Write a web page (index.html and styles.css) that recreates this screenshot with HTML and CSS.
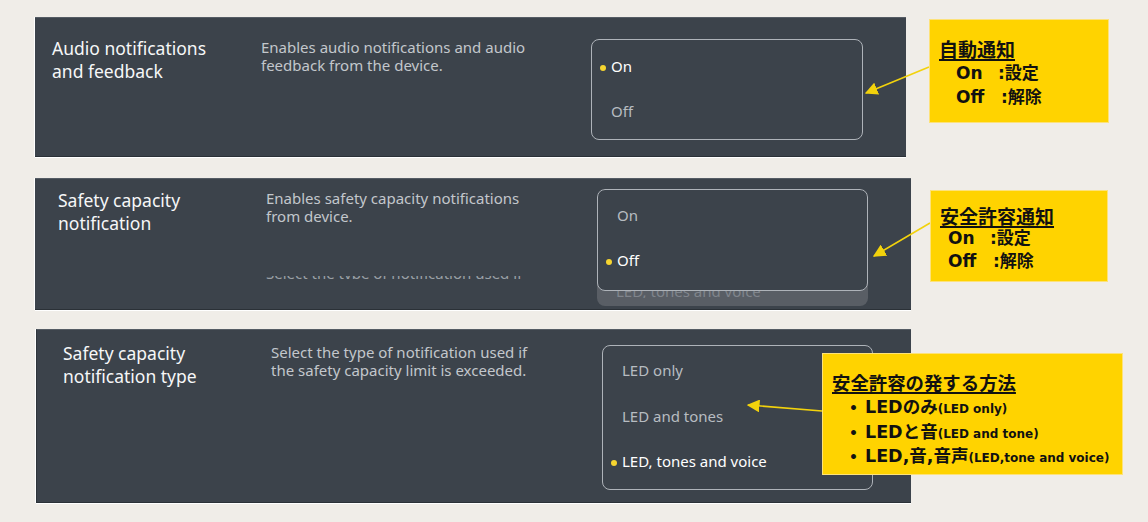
FILE: index.html
```html
<!DOCTYPE html>
<html lang="ja">
<head>
    <meta charset="UTF-8">
    <meta name="viewport" content="width=device-width, initial-scale=1.0">
    <title>Notification settings</title>
    <link rel="stylesheet" href="styles.css">
</head>
<body>
    <div class="page">

        <!-- Audio notifications -->
        <div class="row row-audio">
            <section class="panel panel-audio">
                <h3 class="setting-title">Audio notifications<br>and feedback</h3>
                <p class="setting-desc">Enables audio notifications and audio<br>feedback from the device.</p>
                <div class="dropdown">
                    <div class="option selected">On</div>
                    <div class="option">Off</div>
                </div>
            </section>
            <aside class="callout callout-audio">
                <div class="callout-head">自動通知</div>
                <div class="callout-line"><span class="key key-on">On</span>:設定</div>
                <div class="callout-line"><span class="key key-off">Off</span>:解除</div>
            </aside>
        </div>

        <!-- Safety capacity notification -->
        <div class="row row-safety">
            <section class="panel panel-safety">
                <h3 class="setting-title">Safety capacity<br>notification</h3>
                <div class="desc-col">
                    <p class="setting-desc">Enables safety capacity notifications<br>from device.</p>
                    <div class="ghost"><span>Select the type of notification used if</span></div>
                </div>
                <div class="dropdown-wrap">
                    <div class="dropdown">
                        <div class="option">On</div>
                        <div class="option selected">Off</div>
                    </div>
                    <div class="dropdown-tail"><span>LED, tones and voice</span></div>
                </div>
            </section>
            <aside class="callout callout-safety">
                <div class="callout-head">安全許容通知</div>
                <div class="callout-line"><span class="key key-on">On</span>:設定</div>
                <div class="callout-line"><span class="key key-off">Off</span>:解除</div>
            </aside>
        </div>

        <!-- Safety capacity notification type -->
        <div class="row row-type">
            <section class="panel panel-type">
                <h3 class="setting-title">Safety capacity<br>notification type</h3>
                <p class="setting-desc">Select the type of notification used if<br>the safety capacity limit is exceeded.</p>
                <div class="dropdown">
                    <div class="option">LED only</div>
                    <div class="option">LED and tones</div>
                    <div class="option selected">LED, tones and voice</div>
                </div>
            </section>
            <aside class="callout callout-type">
                <div class="callout-head">安全許容の発する方法</div>
                <ul class="callout-list">
                    <li>LEDのみ<small>(LED only)</small></li>
                    <li>LEDと音<small>(LED and tone)</small></li>
                    <li>LED,音,音声<small>(LED,tone and voice)</small></li>
                </ul>
            </aside>
        </div>

        <!-- annotation arrows -->
        <svg class="arrows" width="1148" height="522" viewBox="0 0 1148 522">
            <defs>
                <marker id="head" viewBox="0 0 10 10" refX="9" refY="5" markerWidth="8" markerHeight="8" orient="auto">
                    <path d="M0 0 L10 5 L0 10 Z" fill="#f2d20c"/>
                </marker>
            </defs>
            <line x1="929" y1="67" x2="866" y2="93" stroke="#f2d20c" stroke-width="1.6" marker-end="url(#head)"/>
            <line x1="930" y1="223" x2="874" y2="256" stroke="#f2d20c" stroke-width="1.6" marker-end="url(#head)"/>
            <line x1="822" y1="411" x2="748" y2="405" stroke="#f2d20c" stroke-width="1.6" marker-end="url(#head)"/>
        </svg>
    </div>
</body>
</html>
```

FILE: styles.css
```css
body {
    margin: 0;
    background-color: #f0ede8;
    font-family: "Noto Sans", "Open Sans", sans-serif;
    color: #f4f5f6;
}

.page {
    position: relative;
    width: 1148px;
    height: 522px;
    padding: 17px 0 0 35px;
    box-sizing: border-box;
    overflow: hidden;
}

.row {
    display: flex;
    align-items: flex-start;
}

.row-safety {
    margin-top: 21px;
}

.row-type {
    margin-top: 19px;
    margin-left: 1px;
}

/* dark settings panels */
.panel {
    display: flex;
    align-items: flex-start;
    box-sizing: border-box;
    background-color: #3c434b;
    border-top: 1px solid #555c64;
    border-bottom: 1px solid #2b3137;
    box-shadow: -1px 0 0 #ffffff, 0 1px 0 #ffffff;
}

.panel-audio {
    width: 871px;
    height: 140px;
    padding: 19px 0 0 17px;
}

.panel-safety {
    width: 876px;
    height: 132px;
    padding: 10px 0 0 23px;
}

.panel-type {
    width: 875px;
    height: 174px;
    padding: 12px 0 0 26px;
    border-left: 1px solid #2f353b;
}

.setting-title {
    width: 209px;
    flex-shrink: 0;
    margin: 0;
    font-size: 17.5px;
    font-weight: normal;
    line-height: 23px;
    color: #f6f7f8;
}

.panel-safety .setting-title,
.panel-type .setting-title {
    width: 208px;
}

.setting-desc {
    margin: 0;
    font-size: 15px;
    line-height: 18px;
    color: #c3c7cc;
}

.panel-audio .setting-desc {
    width: 330px;
    margin-top: 1px;
}

.panel-type .setting-desc {
    width: 331px;
    margin-top: 1px;
}

.desc-col {
    width: 331px;
}

/* the next row's text peeking through the screenshot */
.ghost {
    height: 3px;
    margin-top: 51px;
    overflow: hidden;
    font-size: 15px;
    line-height: 18px;
    color: #9aa0a6;
}

.ghost span {
    display: block;
    margin-top: -12px;
}

/* dropdown list */
.dropdown {
    box-sizing: border-box;
    width: 272px;
    height: 101px;
    margin-top: 2px;
    padding-top: 4px;
    border: 1px solid #aeb3b9;
    border-radius: 8px;
    background-color: #3c434b;
}

.option {
    height: 45px;
    line-height: 45px;
    padding-left: 19px;
    font-size: 15px;
    color: #b7bcc1;
}

.option.selected {
    color: #ffffff;
}

.option.selected::before {
    content: "";
    display: inline-block;
    width: 6px;
    height: 6px;
    margin-left: -11px;
    margin-right: 5px;
    border-radius: 50%;
    background-color: #f6d530;
    vertical-align: middle;
}

.dropdown-wrap {
    width: 271px;
    height: 117px;
    border-radius: 8px;
    background-color: #595e65;
    overflow: hidden;
}

.dropdown-wrap .dropdown {
    width: 271px;
    height: 102px;
    margin-top: 0;
    padding-top: 3px;
}

.dropdown-tail {
    height: 7px;
    overflow: hidden;
    padding-left: 19px;
    font-size: 15px;
    line-height: 18px;
    color: #80858c;
}

.dropdown-tail span {
    display: block;
    margin-top: -9px;
}

.panel-type .dropdown {
    width: 271px;
    height: 145px;
    margin-top: 3px;
    padding-top: 2px;
}

.panel-type .option {
    height: 45.5px;
    line-height: 45.5px;
}

/* yellow annotation boxes */
.callout {
    position: relative;
    z-index: 1;
    box-sizing: border-box;
    background-color: #ffd300;
    border: 1px solid #fde27a;
    font-family: "DejaVu Sans", "Noto Sans CJK JP", sans-serif;
    font-weight: bold;
    color: #111111;
}

.callout-head {
    font-family: "Noto Sans CJK JP", sans-serif;
    font-size: 19px;
    line-height: 24px;
    text-decoration: underline;
    text-decoration-thickness: 1.5px;
    text-underline-offset: 2px;
}

.callout-line {
    font-size: 17px;
    line-height: 24px;
}

.callout-line .key {
    display: inline-block;
}

.key-on {
    width: 42px;
}

.key-off {
    width: 45px;
}

.callout-audio {
    width: 180px;
    height: 104px;
    margin: 2px 0 0 23px;
    padding: 17px 0 0 9px;
}

.callout-audio .callout-line {
    padding-left: 17px;
}

.callout-safety {
    width: 178px;
    height: 92px;
    margin: 12px 0 0 19px;
    padding: 13px 0 0 9px;
}

.callout-safety .callout-head,
.callout-safety .callout-line {
    line-height: 23px;
}

.callout-safety .callout-line {
    padding-left: 8px;
}

.callout-type {
    width: 301px;
    height: 122px;
    margin: 24px 0 0 -89px;
    padding: 16px 0 0 9px;
}

.callout-type .callout-head {
    font-size: 18.4px;
    line-height: 24px;
}

.callout-list {
    list-style: none;
    margin: 2px 0 0;
    padding: 0 0 0 17px;
}

.callout-list li {
    font-size: 17.5px;
    line-height: 22.5px;
}

.callout-list li::before {
    content: "•";
    display: inline-block;
    width: 16px;
    font-size: 14px;
}

.callout-list small {
    font-size: 12px;
}

.arrows {
    position: absolute;
    top: 0;
    left: 0;
    pointer-events: none;
}
```
